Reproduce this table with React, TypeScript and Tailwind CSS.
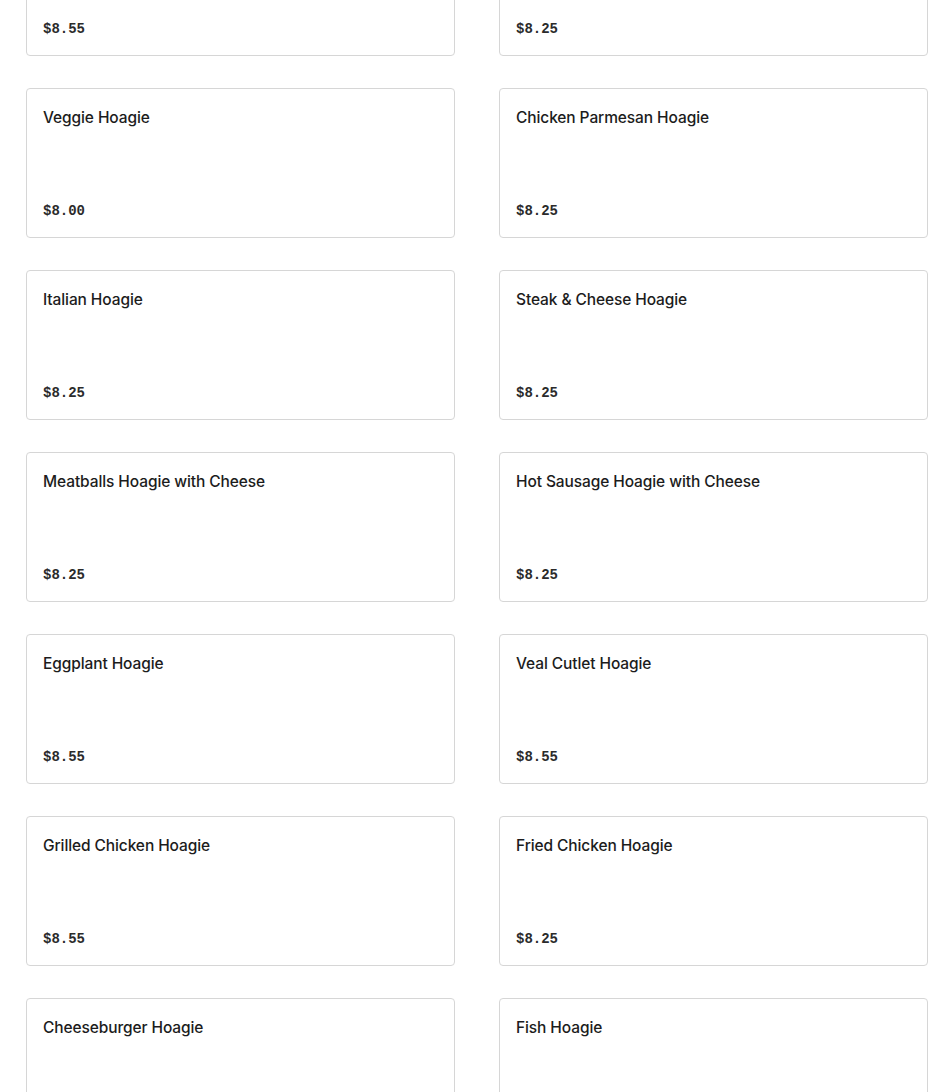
import React from 'react';

interface Item {
  name: string;
  price: string;
}

const items: Item[] = [
  { name: 'Philly Cheesesteak Hoagie', price: '$8.55' },
  { name: 'Chicken Cheesesteak Hoagie', price: '$8.25' },
  { name: 'Veggie Hoagie', price: '$8.00' },
  { name: 'Chicken Parmesan Hoagie', price: '$8.25' },
  { name: 'Italian Hoagie', price: '$8.25' },
  { name: 'Steak & Cheese Hoagie', price: '$8.25' },
  { name: 'Meatballs Hoagie with Cheese', price: '$8.25' },
  { name: 'Hot Sausage Hoagie with Cheese', price: '$8.25' },
  { name: 'Eggplant Hoagie', price: '$8.55' },
  { name: 'Veal Cutlet Hoagie', price: '$8.55' },
  { name: 'Grilled Chicken Hoagie', price: '$8.55' },
  { name: 'Fried Chicken Hoagie', price: '$8.25' },
  { name: 'Cheeseburger Hoagie', price: '$8.55' },
  { name: 'Fish Hoagie', price: '$8.25' },
];

export default function App() {
  return (
    <div className="h-[1092px] overflow-hidden bg-white">
      {/* menu list, scrolled part way down */}
      <div className="mt-[-94px] grid grid-cols-2 gap-x-[44px] gap-y-[32px] pl-[26px] pr-[22px]">
        {items.map((item) => (
          <div
            key={item.name}
            className="flex h-[150px] flex-col justify-between rounded-[4px] border border-[#d6d6d6] bg-white p-4"
          >
            <h3 className="mt-px font-['Inter',sans-serif] text-[15.5px] font-medium leading-6 tracking-[-0.1px] text-[#1c1c1c]">
              {item.name}
            </h3>
            <span className="font-['Liberation_Mono',monospace] text-[14px] font-bold leading-5 text-[#2b2b2b]">
              {item.price}
            </span>
          </div>
        ))}
      </div>
    </div>
  );
}
